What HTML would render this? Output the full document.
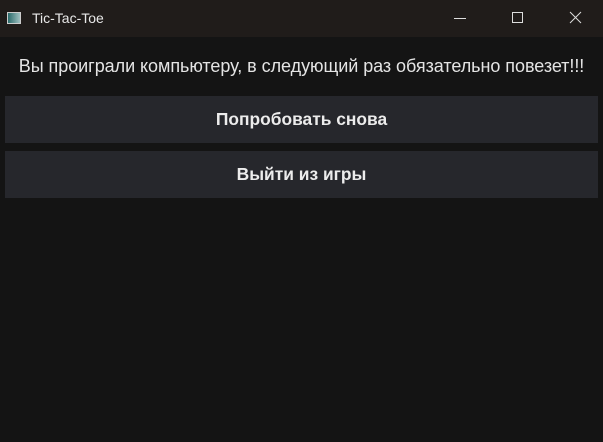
<!DOCTYPE html>
<html><head><meta charset="utf-8"><style>
html,body{margin:0;padding:0;width:603px;height:442px;overflow:hidden;background:#141414;font-family:"Liberation Sans","DejaVu Sans",sans-serif;}
.tb{position:absolute;left:0;top:0;width:603px;height:37px;background:#201c1a;}
.ic{position:absolute;left:7px;top:12px;width:14px;height:12px;background:linear-gradient(90deg,#2a6a6a,#9fc0c0);border:1px solid #ccc;box-sizing:border-box}
.tt{position:absolute;left:32px;top:10px;color:#e8e8e8;font-size:14px;}
.msg{position:absolute;left:0;width:603px;top:56px;text-align:center;color:#e4e4e4;font-size:18px;letter-spacing:-0.05px;white-space:nowrap;}
.btn{position:absolute;left:5px;width:593px;height:47px;background:#26272c;color:#ececec;font-weight:bold;font-size:17.4px;text-align:center;line-height:47px;}
</style></head><body>
<div class="tb"><div class="ic"></div><div class="tt">Tic-Tac-Toe</div>
<svg style="position:absolute;left:0;top:0" width="603" height="37">
<line x1="454" y1="18.5" x2="466" y2="18.5" stroke="#ddd" stroke-width="1"/>
<rect x="512.5" y="12.5" width="10" height="10" fill="none" stroke="#ddd" stroke-width="1"/>
<path d="M570 12 L581 23 M581 12 L570 23" stroke="#ddd" stroke-width="1"/>
</svg></div>
<div class="msg">Вы проиграли компьютеру, в следующий раз обязательно повезет!!!</div>
<div class="btn" style="top:96px">Попробовать снова</div>
<div class="btn" style="top:151px">Выйти из игры</div>
</body></html>
